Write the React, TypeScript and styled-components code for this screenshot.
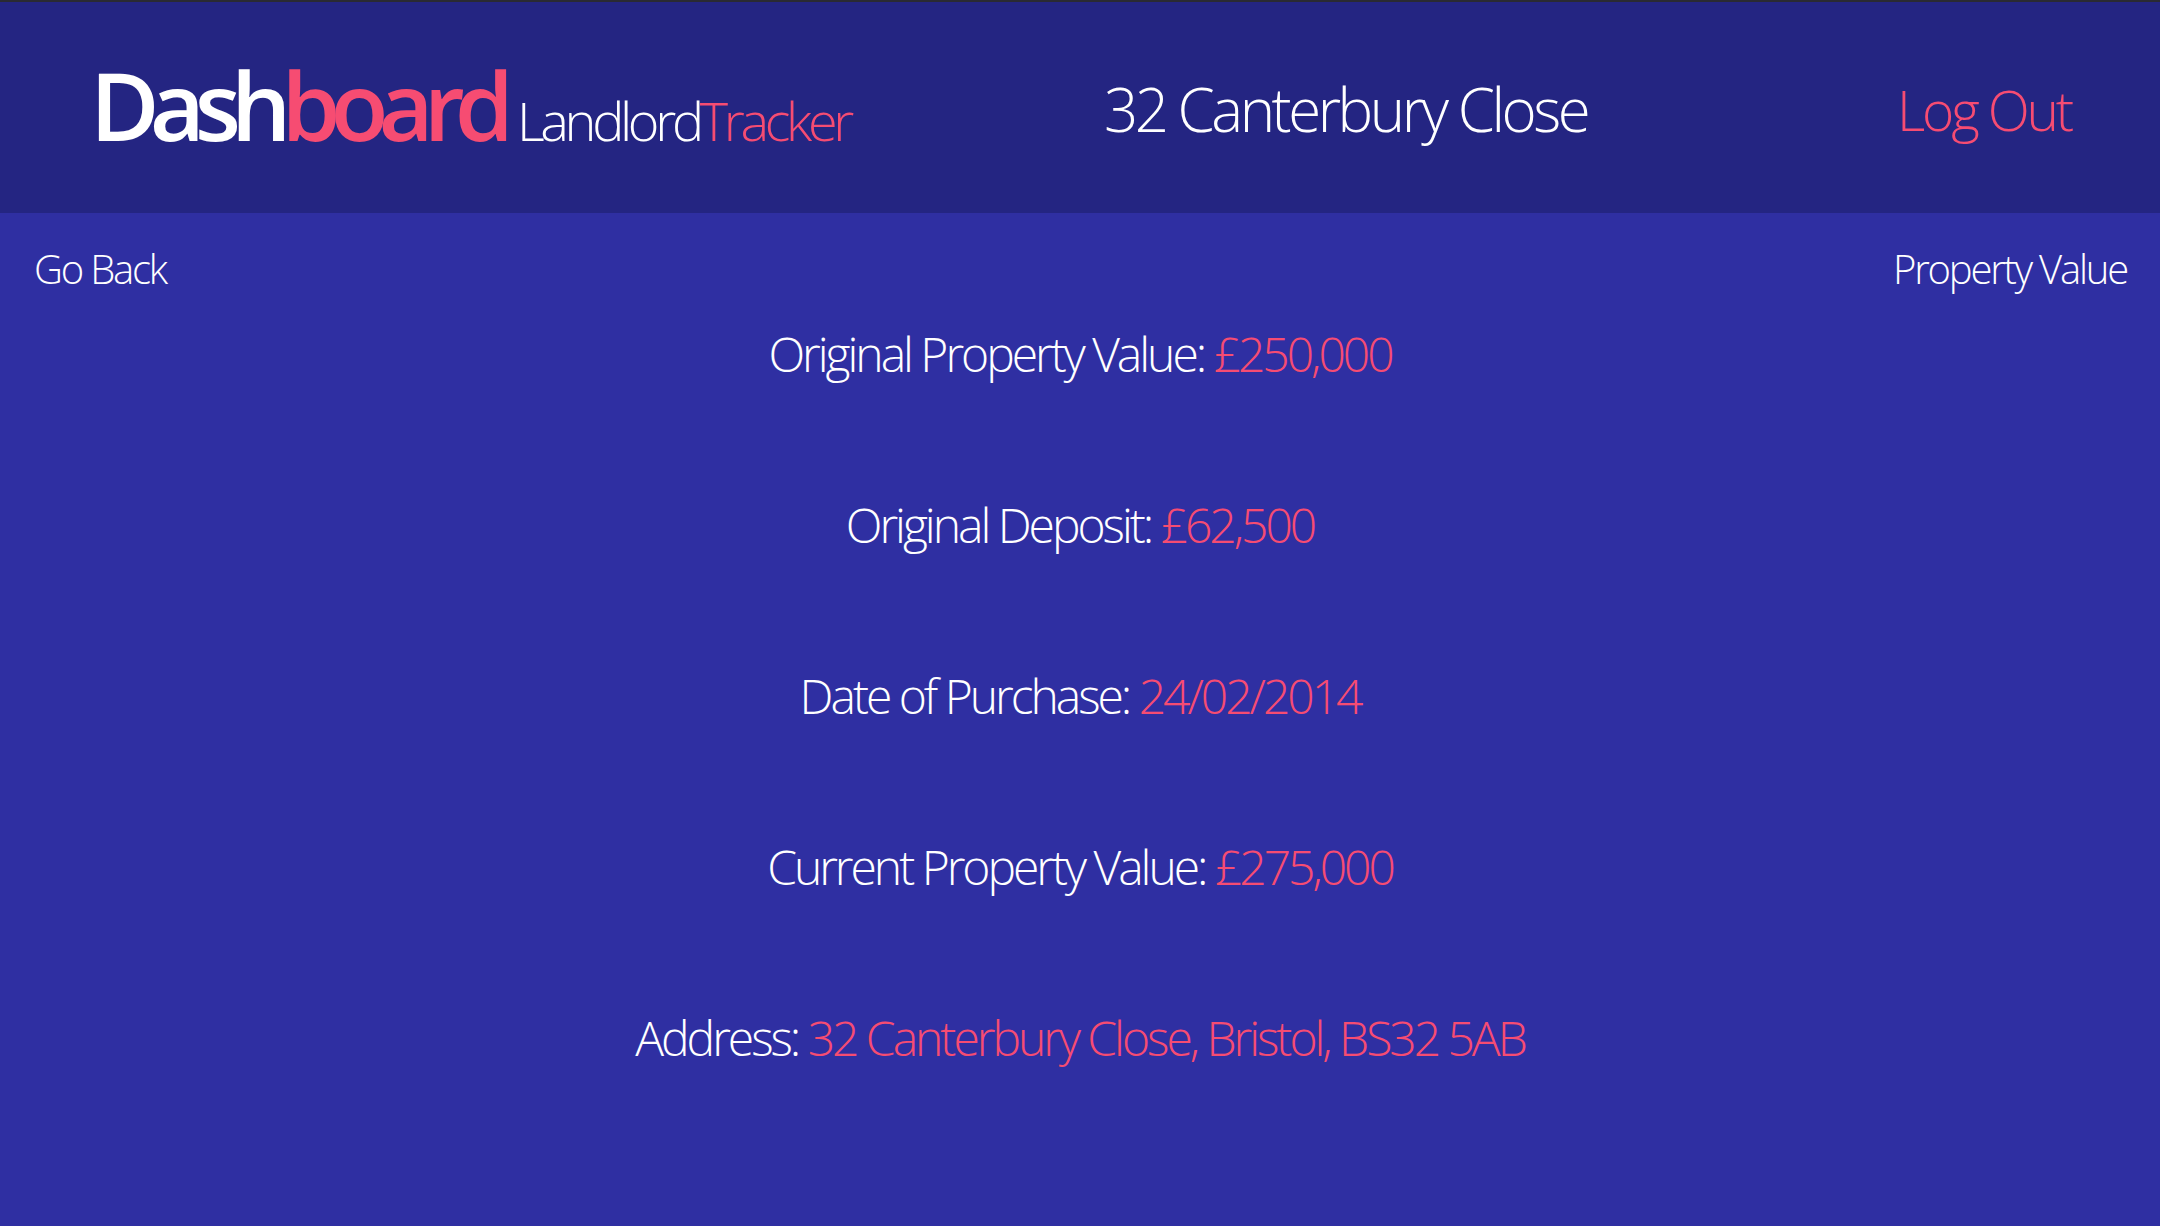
import React from "react";
import styled, { createGlobalStyle } from "styled-components";

const GlobalStyle = createGlobalStyle`
  html, body {
    margin: 0;
    padding: 0;
    background: #2f2fa2;
  }
  body {
    font-family: "Open Sans", "Noto Sans", sans-serif;
    font-weight: 300;
    color: #ffffff;
    min-height: 1226px;
  }
`;

const Page = styled.div`
  min-height: 1226px;
  background: #2f2fa2;
  display: flex;
  flex-direction: column;
`;

const Header = styled.header`
  height: 211px;
  border-top: 2px solid #2a2a33;
  background: #242582;
  display: flex;
  align-items: flex-start;
  padding: 0 89px 0 90px;
`;

const Logo = styled.div`
  display: flex;
  align-items: baseline;
  gap: 13px;
  margin-top: 55px;
`;

const LogoMain = styled.span`
  font-size: 95px;
  line-height: 1;
  font-weight: 600;
  letter-spacing: -0.105em;
  color: #ffffff;
`;

const Accent = styled.span`
  color: #f64c72;
`;

const LogoSub = styled.span`
  font-size: 54px;
  line-height: 1;
  font-weight: 300;
  letter-spacing: -0.08em;
  color: #ffffff;
`;

const Title = styled.h1`
  margin: 77px 0 0 254px;
  font-size: 60px;
  line-height: 1;
  font-weight: 300;
  letter-spacing: -0.058em;
  color: #ffffff;
`;

const LogOut = styled.a`
  margin: 80px 0 0 auto;
  font-size: 55px;
  line-height: 1;
  letter-spacing: -0.058em;
  color: #f64c72;
  text-decoration: none;
  cursor: pointer;
`;

const SubNav = styled.nav`
  display: flex;
  justify-content: space-between;
  padding: 36px 33px 0 34px;
`;

const NavLink = styled.a`
  font-size: 40px;
  line-height: 1;
  letter-spacing: -0.055em;
  color: #ffffff;
  cursor: pointer;
`;

const Details = styled.section`
  display: flex;
  flex-direction: column;
  align-items: center;
  gap: 51px;
  margin-top: 5px;
`;

const Row = styled.p`
  margin: 0;
  font-size: 48px;
  line-height: 120px;
  letter-spacing: -0.063em;
  color: #ffffff;
  text-align: center;
`;

const Value = styled.span`
  color: #f64c72;
`;

const details = [
  { label: "Original Property Value", value: "£250,000" },
  { label: "Original Deposit", value: "£62,500" },
  { label: "Date of Purchase", value: "24/02/2014" },
  { label: "Current Property Value", value: "£275,000" },
  { label: "Address", value: "32 Canterbury Close, Bristol, BS32 5AB" },
];

export default function App() {
  return (
    <>
      <GlobalStyle />
      <Page>
        <Header>
          <Logo>
            <LogoMain>
              Dash<Accent>board</Accent>
            </LogoMain>
            <LogoSub>
              Landlord<Accent>Tracker</Accent>
            </LogoSub>
          </Logo>
          <Title>32 Canterbury Close</Title>
          <LogOut>Log Out</LogOut>
        </Header>
        <SubNav>
          <NavLink>Go Back</NavLink>
          <NavLink>Property Value</NavLink>
        </SubNav>
        <Details>
          {details.map((d) => (
            <Row key={d.label}>
              {d.label}: <Value>{d.value}</Value>
            </Row>
          ))}
        </Details>
      </Page>
    </>
  );
}
